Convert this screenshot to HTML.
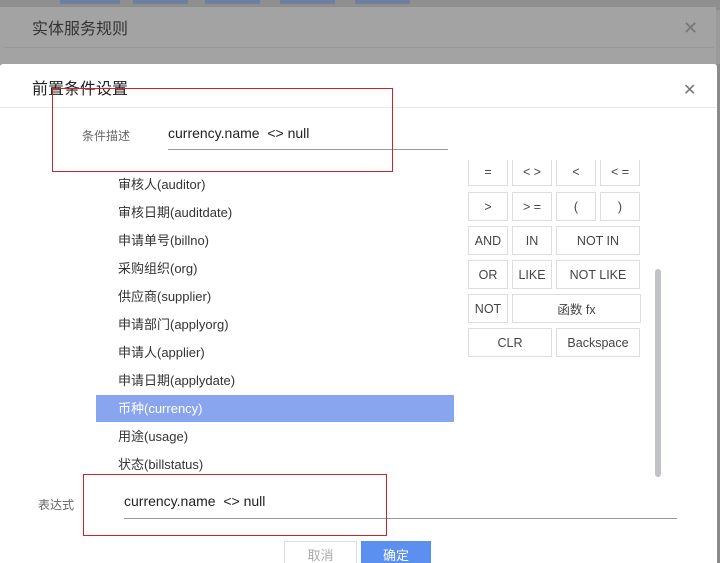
<!DOCTYPE html>
<html><head><meta charset="utf-8"><style>
*{margin:0;padding:0;box-sizing:border-box}
html,body{width:720px;height:563px;overflow:hidden}
body{background:#9a9a9a;font-family:"Liberation Sans","Noto Sans CJK SC",sans-serif;position:relative}
.a{position:absolute}
.btn{position:absolute;border:1px solid #ddd;background:#fff;color:#444;font-size:12.5px;display:flex;align-items:center;justify-content:center;height:29px}
.li{position:absolute;left:96px;width:358px;height:27px;font-size:13px;color:#333;padding-left:22px;line-height:27px}
</style></head><body>
<div class="a" style="left:0;top:0;width:720px;height:10px;background:#8f8f8f"></div>
<div class="a" style="left:60px;top:0;width:60px;height:4px;background:#6f7f9f"></div>
<div class="a" style="left:133px;top:0;width:55px;height:4px;background:#6f7f9f"></div>
<div class="a" style="left:205px;top:0;width:55px;height:4px;background:#6f7f9f"></div>
<div class="a" style="left:280px;top:0;width:55px;height:4px;background:#6f7f9f"></div>
<div class="a" style="left:355px;top:0;width:55px;height:4px;background:#6f7f9f"></div>
<div class="a" style="left:0;top:7px;width:716px;height:80px;background:#a3a3a3"></div>
<div class="a" style="left:32px;top:15px;font-size:16px;color:#333">实体服务规则</div>
<div class="a" style="left:683px;top:18px;font-size:18px;color:#777">✕</div>
<div class="a" style="left:4px;top:47px;width:710px;height:1px;background:#989898"></div>
<div class="a" style="left:0;top:64px;width:717px;height:499px;background:#fff;border-radius:3px 3px 0 0"></div>
<div class="a" style="left:32px;top:75px;font-size:16px;color:#222">前置条件设置</div>
<div class="a" style="left:683px;top:80px;font-size:16px;color:#777">✕</div>
<div class="a" style="left:0;top:107px;width:716px;height:1px;background:#e8e8e8"></div>
<div class="a" style="left:82px;top:127px;font-size:12px;color:#666">条件描述</div>
<div class="a" style="left:168px;top:125px;font-size:14px;color:#222">currency.name&nbsp; &lt;&gt; null</div>
<div class="a" style="left:168px;top:149px;width:280px;height:1px;background:#999"></div>
<div class="a" style="left:52px;top:88px;width:341px;height:84px;border:1px solid #c9252b"></div>
<div class="li" style="top:171px">审核人(auditor)</div>
<div class="li" style="top:199px">审核日期(auditdate)</div>
<div class="li" style="top:227px">申请单号(billno)</div>
<div class="li" style="top:255px">采购组织(org)</div>
<div class="li" style="top:283px">供应商(supplier)</div>
<div class="li" style="top:311px">申请部门(applyorg)</div>
<div class="li" style="top:339px">申请人(applier)</div>
<div class="li" style="top:367px">申请日期(applydate)</div>
<div class="li" style="top:395px;background:#8aa5f0;color:#fff">币种(currency)</div>
<div class="li" style="top:423px">用途(usage)</div>
<div class="li" style="top:451px">状态(billstatus)</div>
<div class="btn" style="left:468px;top:157px;width:40px">=</div>
<div class="btn" style="left:512px;top:157px;width:40px">&lt; &gt;</div>
<div class="btn" style="left:556px;top:157px;width:40px">&lt;</div>
<div class="btn" style="left:600px;top:157px;width:40px">&lt; =</div>
<div class="a" style="left:460px;top:150px;width:190px;height:10px;background:#fff"></div>
<div class="btn" style="left:468px;top:192px;width:40px">&gt;</div>
<div class="btn" style="left:512px;top:192px;width:40px">&gt; =</div>
<div class="btn" style="left:556px;top:192px;width:40px">(</div>
<div class="btn" style="left:600px;top:192px;width:40px">)</div>
<div class="btn" style="left:468px;top:226px;width:40px">AND</div>
<div class="btn" style="left:512px;top:226px;width:40px">IN</div>
<div class="btn" style="left:556px;top:226px;width:84px">NOT IN</div>
<div class="btn" style="left:468px;top:260px;width:40px">OR</div>
<div class="btn" style="left:512px;top:260px;width:40px">LIKE</div>
<div class="btn" style="left:556px;top:260px;width:84px">NOT LIKE</div>
<div class="btn" style="left:468px;top:294px;width:40px">NOT</div>
<div class="btn" style="left:512px;top:294px;width:129px">函数 fx</div>
<div class="btn" style="left:468px;top:328px;width:84px">CLR</div>
<div class="btn" style="left:556px;top:328px;width:84px">Backspace</div>
<div class="a" style="left:655px;top:269px;width:6px;height:208px;background:#c0c2c8;border-radius:3px"></div>
<div class="a" style="left:38px;top:496px;font-size:12px;color:#666">表达式</div>
<div class="a" style="left:124px;top:493px;font-size:14px;color:#222">currency.name&nbsp; &lt;&gt; null</div>
<div class="a" style="left:124px;top:518px;width:553px;height:1px;background:#999"></div>
<div class="a" style="left:83px;top:474px;width:304px;height:62px;border:1px solid #c9252b"></div>
<div class="a" style="left:284px;top:541px;width:73px;height:30px;border:1px solid #ddd;color:#aaa;font-size:13px;text-align:center;line-height:28px">取消</div>
<div class="a" style="left:361px;top:541px;width:70px;height:30px;background:#5b8ff0;color:#fff;font-size:13px;text-align:center;line-height:30px">确定</div>
<div class="a" style="left:717px;top:64px;width:3px;height:499px;background:#8a8a8a"></div>
</body></html>
